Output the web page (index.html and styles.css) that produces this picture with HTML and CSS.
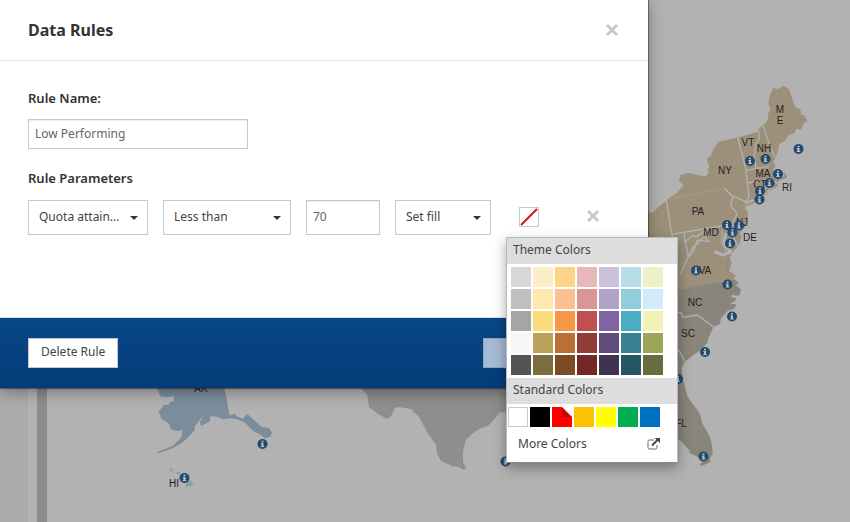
FILE: index.html
```html
<!DOCTYPE html>
<html lang="en">
<head>
<meta charset="utf-8">
<title>Data Rules</title>
<link rel="stylesheet" href="styles.css">
</head>
<body>
<svg class="map" viewBox="0 0 850 522" preserveAspectRatio="xMinYMin meet" role="img" aria-label="Map of sales regions">
  <defs>
    <g id="pin">
      <circle r="5" fill="#24496f"/>
      <path d="M-1-3.3h2v1.6h-2zM-1.7-1h2.7v3h.8v1.1h-3.6V2h.8V0h-.7z" fill="#bdc2c7"/>
    </g>
  </defs>
  <rect width="26" height="522" fill="#ababab"/>
  <rect x="26" width="1" height="522" fill="#a4a4a4"/>
  <rect x="37" width="10" height="522" fill="#8d8d8d"/>

  <!-- Eastern states -->
  <g transform="translate(645 70) scale(.33333)">
    <path fill="#9c907a" d="M0 434L10 428 25 426 42 410 62 392 75 382 95 370 115 345 102 332 105 316 130 308 150 313 180 320 192 308 187 298 193 290 185 266 197 258 205 236 222 215 280 202 340 185 345 170 355 166 368 150 370 130 376 118 370 100 375 75 385 54 397 58 415 47 432 58 448 105 453 115 466 118 469 135 478 136 488 154 476 160 468 180 455 176 448 190 430 196 420 212 402 222 400 240 392 262 385 275 392 288 384 298 395 310 410 322 418 318 412 308 420 309 427 322 400 334 398 350 384 356 350 385 320 403 298 412 302 418 308 425 309 450 298 475 284 488 290 500 284 520 272 537 262 550 252 560 260 580 252 602 274 618 266 624 272 632 97 662 0 670z"/>
    <path fill="#89857a" d="M97 660L270 629 280 638 273 645 288 658 284 675 272 678 264 672 258 682 274 684 270 694 252 703 273 702 268 716 248 722 228 745 225 762 205 771 190 805 186 820 160 845 145 855 120 875 110 893 112 920 128 980 165 1032 172 1060 194 1100 201 1125 203 1152 195 1164 196 1176 172 1187 164 1184 173 1174 165 1164 135 1150 132 1140 110 1115 97 1105z"/>
    <g fill="none" stroke="#b2b2b2" stroke-width="4" stroke-linejoin="round">
      <path d="M278 202L288 240 303 298 307 338 312 383 300 398 318 392 340 388 362 370 382 352M341 184L343 205 332 225 328 258 333 296M354 166L370 215 390 262M304 301L372 289M307 339L378 326 398 340M358 330L363 357"/>
      <path d="M238 354L258 375 302 395M264 380L257 408 277 430 262 462M64 390L80 492 97 528M80 493L262 462 278 490M118 490L120 515 142 497 155 500 180 482 190 498M120 510L130 560 105 615M130 560L142 535 178 500 192 515 157 510 145 545 132 560"/>
      <path d="M97 728L108 728 114 742 157 735 206 771M97 835L107 850 118 873M261 462L264 500 282 535"/>
      <path stroke-width="2" stroke="#a9a08f" d="M75 386L238 356"/>
      <path stroke-width="9" d="M208 545L235 555 258 545 243 530 237 515 242 490"/>
      <path stroke-width="3" d="M232 480L229 515 241 540 247 553"/>
      <path stroke-width="3" stroke="#8b8b89" d="M258 555L248 575 246 603"/>
      <path stroke-width="3" d="M230 633L262 638M300 405L350 380"/>
    </g>
  </g>

  <!-- Gulf coast -->
  <path fill="#8e8e8e" d="M360 388L367 394 369 407 378 414 387 419 391 416 395 408 399 407 411 409 419 417 427 432 436 445 437 453 441 461 452 466 459 467 464 470 466 468 463 462 463 451 466 440 472 434 479 429 488 426 497 416 500 412 510 413V388z"/>

  <!-- Alaska and Hawaii -->
  <g transform="translate(0 300) scale(.33333)">
    <path fill="#7b8d9c" d="M470 263H673L689 346 704 342 708 348 728 356 742 342 785 380 808 385 816 398 812 410 794 415 775 400 763 396 735 368 714 358 690 355 668 358 650 350 630 349 630 364 603 378 600 366 612 345 583 380 586 388 566 410 548 427 518 445 473 461 475 455 520 437 545 410 547 390 533 394 512 388 508 372 482 355 481 345 475 337 492 314 505 314 510 306 522 304 521 288 505 292 482 290z"/>
    <path fill="#8da0aa" d="M508 506L516 504 520 514 513 516zM528 515H540L541 524 529 521zM541 524L553 526 550 533zM558 546L571 541 582 549 572 558 558 561z"/>
  </g>

  <g class="map-labels">
    <text x="780" y="113">M</text><text x="780" y="124">E</text>
    <text x="748" y="146">VT</text><text x="764" y="152">NH</text>
    <text x="725" y="174">NY</text><text x="763" y="177">MA</text>
    <text x="760" y="188">CT</text><text x="787" y="191">RI</text>
    <text x="698" y="215">PA</text><text x="742" y="226">NJ</text>
    <text x="711" y="236">MD</text><text x="750" y="241">DE</text>
    <text x="705" y="274">VA</text><text x="695" y="306">NC</text>
    <text x="688" y="337">SC</text><text x="681" y="427">FL</text>
    <text x="201" y="392">AK</text><text x="174" y="487">HI</text>
  </g>
  <use href="#pin" x="798.5" y="149"/><use href="#pin" x="750" y="161"/>
  <use href="#pin" x="765.5" y="159"/><use href="#pin" x="778" y="174"/>
  <use href="#pin" x="769.5" y="183"/><use href="#pin" x="760" y="191"/>
  <use href="#pin" x="759.5" y="199.5"/><use href="#pin" x="727" y="225"/>
  <use href="#pin" x="739" y="225.5"/><use href="#pin" x="732.5" y="232.5"/>
  <use href="#pin" x="730" y="243.5"/><use href="#pin" x="696" y="270.5"/>
  <use href="#pin" x="727.5" y="284.5"/><use href="#pin" x="732" y="316.5"/>
  <use href="#pin" x="705" y="352"/><use href="#pin" x="678" y="379"/>
  <use href="#pin" x="703.5" y="456.5"/><use href="#pin" x="505.5" y="461.5"/>
  <use href="#pin" x="262.5" y="444"/><use href="#pin" x="184.5" y="478"/>
</svg>

<section class="dialog" role="dialog" aria-labelledby="dialog-title">
  <header class="dialog-header">
    <h1 id="dialog-title">Data Rules</h1>
    <button class="icon-button" type="button" aria-label="Close">
      <svg viewBox="0 0 14 14"><path d="M2 2l10 10M12 2L2 12"/></svg>
    </button>
  </header>
  <form class="dialog-body">
    <label class="field-title" for="rule-name">Rule Name:</label>
    <input class="text-input name-input" id="rule-name" type="text" value="Low Performing">
    <h2 class="field-title">Rule Parameters</h2>
    <div class="parameters">
      <div class="select select-metric"><select aria-label="Metric"><option>Quota attain...</option></select></div>
      <div class="select select-operator"><select aria-label="Operator"><option>Less than</option></select></div>
      <input class="text-input value-input" type="text" value="70" aria-label="Value">
      <div class="select select-action"><select aria-label="Action"><option>Set fill</option></select></div>
      <div class="color-picker">
        <button class="current-color" type="button" aria-label="Fill color">
          <svg viewBox="0 0 18 18"><path d="M1 17L17 1"/></svg>
        </button>
        <div class="popover">
          <h3>Theme Colors</h3>
          <div class="swatches theme-swatches">
            <button type="button" class="c-d8d8d8" aria-label="Gray 1"></button><button type="button" class="c-fdeec8" aria-label="Gold 1"></button><button type="button" class="c-fbd585" aria-label="Orange 1"></button><button type="button" class="c-e6b8b9" aria-label="Red 1"></button><button type="button" class="c-ccc1da" aria-label="Purple 1"></button><button type="button" class="c-b7dde8" aria-label="Aqua 1"></button><button type="button" class="c-eef0c8" aria-label="Olive 1"></button>
            <button type="button" class="c-bfbfbf" aria-label="Gray 2"></button><button type="button" class="c-fde8ae" aria-label="Gold 2"></button><button type="button" class="c-fac08f" aria-label="Orange 2"></button><button type="button" class="c-d99694" aria-label="Red 2"></button><button type="button" class="c-b2a2c7" aria-label="Purple 2"></button><button type="button" class="c-92cddc" aria-label="Aqua 2"></button><button type="button" class="c-d0ecf9" aria-label="Olive 2"></button>
            <button type="button" class="c-a5a5a5" aria-label="Gray 3"></button><button type="button" class="c-fbdb7c" aria-label="Gold 3"></button><button type="button" class="c-f79646" aria-label="Orange 3"></button><button type="button" class="c-c0504d" aria-label="Red 3"></button><button type="button" class="c-8064a2" aria-label="Purple 3"></button><button type="button" class="c-4bacc6" aria-label="Aqua 3"></button><button type="button" class="c-f2f2b5" aria-label="Olive 3"></button>
            <button type="button" class="c-f7f7f7" aria-label="Gray 4"></button><button type="button" class="c-bca35c" aria-label="Gold 4"></button><button type="button" class="c-b97034" aria-label="Orange 4"></button><button type="button" class="c-903c39" aria-label="Red 4"></button><button type="button" class="c-604b79" aria-label="Purple 4"></button><button type="button" class="c-388194" aria-label="Aqua 4"></button><button type="button" class="c-9da55b" aria-label="Olive 4"></button>
            <button type="button" class="c-545454" aria-label="Gray 5"></button><button type="button" class="c-7d6c3d" aria-label="Gold 5"></button><button type="button" class="c-7b4b23" aria-label="Orange 5"></button><button type="button" class="c-732826" aria-label="Red 5"></button><button type="button" class="c-403251" aria-label="Purple 5"></button><button type="button" class="c-255663" aria-label="Aqua 5"></button><button type="button" class="c-696d3d" aria-label="Olive 5"></button>
          </div>
          <h3>Standard Colors</h3>
          <div class="swatches standard-swatches">
            <button type="button" class="c-white" aria-label="White"></button><button type="button" class="c-black" aria-label="Black"></button><button type="button" class="c-red selected" aria-label="Red" aria-pressed="true"></button><button type="button" class="c-amber" aria-label="Amber"></button><button type="button" class="c-yellow" aria-label="Yellow"></button><button type="button" class="c-green" aria-label="Green"></button><button type="button" class="c-blue" aria-label="Blue"></button>
          </div>
          <button class="more-colors" type="button">More Colors
            <svg viewBox="0 0 13 12"><path d="M7 2H2.500Q1 2 1 3.500v6Q1 11 2.500 11h6Q10 11 10 9.500V7"/><path class="arrow" d="M5 7.500L10.500 2"/><path class="tip" d="M7.500 0H13v5z"/></svg>
          </button>
        </div>
      </div>
      <button class="icon-button remove-button" type="button" aria-label="Remove parameter">
        <svg viewBox="0 0 14 14"><path d="M2 2l10 10M12 2L2 12"/></svg>
      </button>
    </div>
  </form>
  <footer class="dialog-footer">
    <button class="footer-button" type="button">Delete Rule</button>
    <button class="footer-button save-button" type="button" aria-label="Save" disabled></button>
  </footer>
</section>
</body>
</html>
```

FILE: styles.css
```css
* { box-sizing: border-box; }

body {
  margin: 0;
  min-height: 100vh;
  overflow: hidden;
  background: #b2b2b2;
  color: #444;
  font: 12px/18px "Noto Sans", "Open Sans", sans-serif;
}

button, input, select { font: inherit; color: inherit; margin: 0; border-radius: 0; }
button { padding: 0; cursor: pointer; }
h1, h2, h3 { margin: 0; }

.map { position: absolute; top: 0; left: 0; width: 100%; }
.map-labels { font: 10px "Liberation Sans", Arial, sans-serif; fill: #222; text-anchor: middle; }

.dialog {
  position: relative;
  max-width: 648px;
  background: #fff;
  box-shadow: 0 0 1px 1px rgba(0, 0, 0, .35), 0 4px 14px rgba(0, 0, 0, .35);
}

.dialog-header {
  display: flex;
  align-items: center;
  justify-content: space-between;
  padding: 18px 28px;
  border-bottom: 1px solid #e8e8e8;
}
.dialog-header h1 { color: #333; font-size: 16px; line-height: 24px; font-weight: 700; }

.icon-button { display: flex; width: 16px; height: 16px; padding: 1px; border: 0; background: none; }
.icon-button svg { width: 14px; height: 14px; fill: none; stroke: #c8c8c8; stroke-width: 3; }

.dialog-body { padding: 28px 28px 82px; }
.field-title { display: block; color: #333; font-size: 13px; line-height: 18px; font-weight: 600; }

.text-input {
  display: block;
  border: 1px solid #c8c8c8;
  padding: 0 6px 2px;
  background: #fff;
  box-shadow: inset 0 1px 1px rgba(0, 0, 0, .08);
  color: #666;
}
.name-input { width: 220px; height: 30px; margin: 12px 0 20px; }

.parameters { display: flex; align-items: flex-start; gap: 15px; margin-top: 13px; }
.value-input { width: 74px; height: 35px; }

.select { position: relative; }
.select select {
  display: block;
  width: 100%;
  height: 35px;
  padding: 0 28px 2px 10px;
  border: 1px solid #c8c8c8;
  background: #fff;
  appearance: none;
}
.select::after {
  content: "";
  position: absolute;
  right: 10px;
  top: 16px;
  border: 4px solid transparent;
  border-top-color: #333;
  border-bottom: 0;
  pointer-events: none;
}
.select-metric { width: 120px; }
.select-operator { width: 128px; }
.select-action { width: 96px; }

.color-picker { position: relative; margin: 7px 31px 0 13px; }
.remove-button { margin-top: 8px; }
.current-color { display: flex; width: 20px; height: 20px; border: 1px solid #c8c8c8; background: #fff; }
.current-color svg { width: 18px; height: 18px; fill: none; stroke: #d0111b; stroke-width: 2; }

.popover {
  position: absolute;
  z-index: 1;
  top: 30px;
  left: -13px;
  width: 172px;
  border: 1px solid #b9b9b9;
  border-bottom-color: #888;
  background: #fff;
  box-shadow: 0 5px 12px rgba(0, 0, 0, .35);
}
.popover h3 { padding: 3px 6px 5px; background: #ddd; font-size: 12px; line-height: 18px; font-weight: 400; }

.swatches { display: grid; grid-template-columns: repeat(7, 20px); gap: 2px; }
.theme-swatches { padding: 3px 4px; }
.standard-swatches { padding: 3px 1px; }
.swatches button { height: 20px; border: 0; }
.swatches .c-white { border: 1px solid #c8c8c8; background: #fff; }
.c-black { background: #000; }
.c-red { background: #f00; }
.c-amber { background: #ffc000; }
.c-yellow { background: #ff0; }
.c-green { background: #00b050; }
.c-blue { background: #0070c0; }
.selected { position: relative; }
.selected::after {
  content: "";
  position: absolute;
  top: 0;
  right: 0;
  border: 5px solid #c00;
  border-top-color: #fff;
  border-right-color: #fff;
}

.c-d8d8d8 { background: #d8d8d8; } .c-fdeec8 { background: #fdeec8; } .c-fbd585 { background: #fbd585; }
.c-e6b8b9 { background: #e6b8b9; } .c-ccc1da { background: #ccc1da; } .c-b7dde8 { background: #b7dde8; }
.c-eef0c8 { background: #eef0c8; } .c-bfbfbf { background: #bfbfbf; } .c-fde8ae { background: #fde8ae; }
.c-fac08f { background: #fac08f; } .c-d99694 { background: #d99694; } .c-b2a2c7 { background: #b2a2c7; }
.c-92cddc { background: #92cddc; } .c-d0ecf9 { background: #d0ecf9; } .c-a5a5a5 { background: #a5a5a5; }
.c-fbdb7c { background: #fbdb7c; } .c-f79646 { background: #f79646; } .c-c0504d { background: #c0504d; }
.c-8064a2 { background: #8064a2; } .c-4bacc6 { background: #4bacc6; } .c-f2f2b5 { background: #f2f2b5; }
.c-f7f7f7 { background: #f7f7f7; } .c-bca35c { background: #bca35c; } .c-b97034 { background: #b97034; }
.c-903c39 { background: #903c39; } .c-604b79 { background: #604b79; } .c-388194 { background: #388194; }
.c-9da55b { background: #9da55b; } .c-545454 { background: #545454; } .c-7d6c3d { background: #7d6c3d; }
.c-7b4b23 { background: #7b4b23; } .c-732826 { background: #732826; } .c-403251 { background: #403251; }
.c-255663 { background: #255663; } .c-696d3d { background: #696d3d; }

.more-colors {
  display: flex;
  align-items: center;
  justify-content: space-between;
  width: 100%;
  padding: 5px 17px 9px 11px;
  border: 0;
  background: none;
  line-height: 18px;
}
.more-colors svg { width: 13px; height: 12px; fill: none; stroke: #666; stroke-width: 1; }
.more-colors .arrow { stroke: #444; stroke-width: 2; }
.more-colors .tip { fill: #444; stroke: none; }

.dialog-footer {
  display: flex;
  align-items: center;
  justify-content: space-between;
  padding: 20px 28px;
  border-top: 1px solid #ddd;
  background: linear-gradient(#084788, #053c78);
  background-clip: padding-box;
}
.footer-button { height: 30px; padding: 0 12px 2px; border: 1px solid #c8c8c8; background: #fff; }
.save-button { width: 137px; border-color: #8ba5c3; background: #a5bad3; }
```
